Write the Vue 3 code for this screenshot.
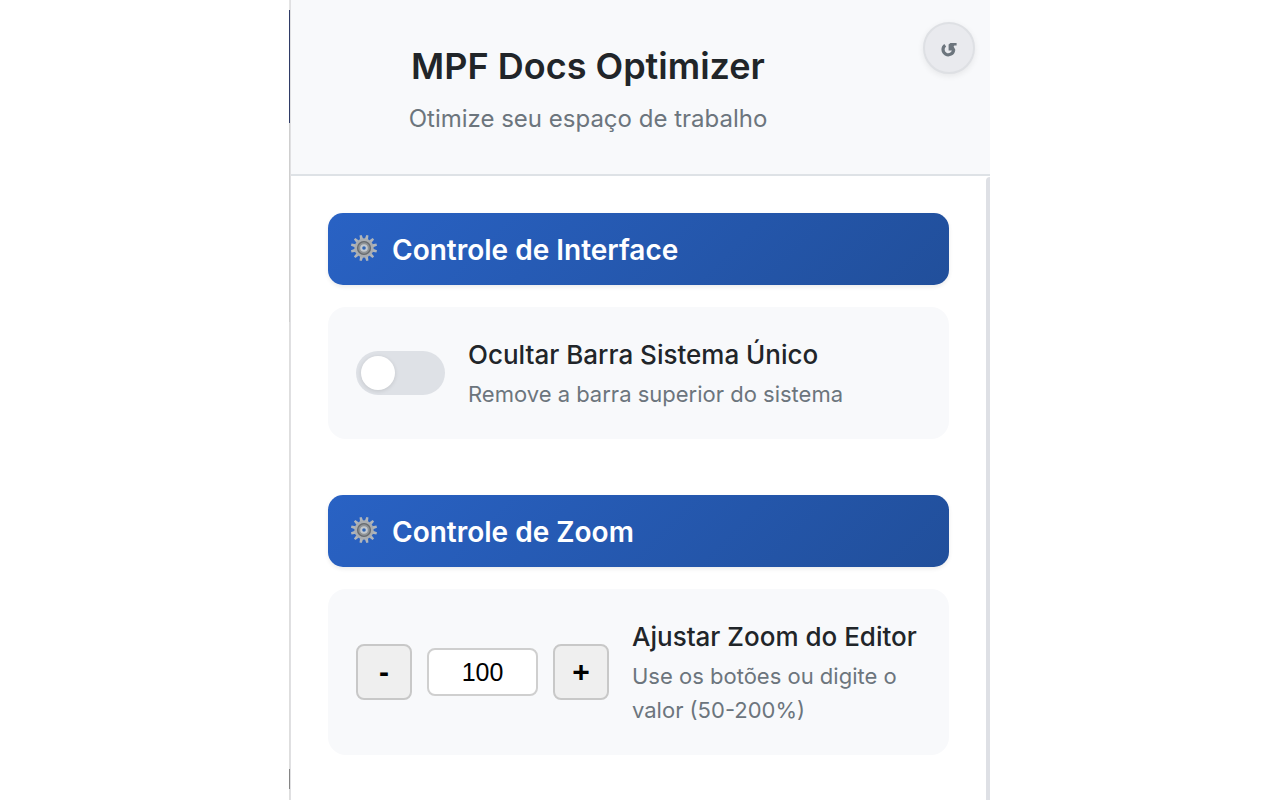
<script setup>
import { ref } from 'vue'

const hideBar = ref(false)
const zoom = ref('100')

function step(delta) {
  const next = (parseInt(zoom.value, 10) || 100) + delta
  zoom.value = String(Math.min(200, Math.max(50, next)))
}

function reset() {
  hideBar.value = false
  zoom.value = '100'
}

const teeth = Array.from({ length: 12 }, (_, i) => 15 + i * 30)
</script>

<template>
  <main class="panel">
    <header class="top">
      <div class="titles">
        <h1>MPF Docs Optimizer</h1>
        <p>Otimize seu espaço de trabalho</p>
      </div>
      <button class="reset" type="button" aria-label="Restaurar" @click="reset">
        <svg viewBox="0 0 16 16" width="16" height="16" aria-hidden="true">
          <path d="M4.2 3.2A5.3 5.3 0 1 0 12.6 8" fill="none" stroke="#6c757d" stroke-width="3.2" />
          <path d="M7.6 8.6V2.6L9.4 1H15.6V3.4H13.4L12.6 4.6L14.2 7.4V8.6Z" fill="#6c757d" />
        </svg>
      </button>
    </header>

    <div class="body">
      <div class="content">
        <section>
          <h2>
            <svg class="gear" viewBox="-14 -14 28 28" aria-hidden="true">
              <path v-for="a in teeth" :key="a" d="M-1.6-9L-1.1-13.2H1.1L1.6-9Z" fill="#b0b5ba" :transform="`rotate(${a})`" />
              <circle r="8.2" fill="#8f9396" stroke="#a9adb1" stroke-width="3" />
              <circle r="6.4" fill="none" stroke="#686c70" stroke-width="1.4" />
              <circle r="2.8" fill="#3166b4" stroke="#c3c8cd" stroke-width="2" />
            </svg>
            <span>Controle de Interface</span>
          </h2>
          <div class="card">
            <input id="hide-bar" v-model="hideBar" class="switch" type="checkbox" role="switch" />
            <div class="info">
              <label for="hide-bar">Ocultar Barra Sistema Único</label>
              <p>Remove a barra superior do sistema</p>
            </div>
          </div>
        </section>

        <section>
          <h2>
            <svg class="gear" viewBox="-14 -14 28 28" aria-hidden="true">
              <path v-for="a in teeth" :key="a" d="M-1.6-9L-1.1-13.2H1.1L1.6-9Z" fill="#b0b5ba" :transform="`rotate(${a})`" />
              <circle r="8.2" fill="#8f9396" stroke="#a9adb1" stroke-width="3" />
              <circle r="6.4" fill="none" stroke="#686c70" stroke-width="1.4" />
              <circle r="2.8" fill="#3166b4" stroke="#c3c8cd" stroke-width="2" />
            </svg>
            <span>Controle de Zoom</span>
          </h2>
          <div class="card">
            <div class="stepper">
              <button type="button" aria-label="Diminuir zoom" @click="step(-10)">-</button>
              <input id="zoom" v-model="zoom" type="text" inputmode="numeric" />
              <button type="button" aria-label="Aumentar zoom" @click="step(10)">+</button>
            </div>
            <div class="info">
              <label for="zoom">Ajustar Zoom do Editor</label>
              <p>Use os botões ou digite o valor (50-200%)</p>
            </div>
          </div>
        </section>
      </div>
      <div class="track"></div>
    </div>
  </main>
</template>

<style>
body {
  margin: 0;
  background: #fff;
}
</style>

<style scoped>
* {
  box-sizing: border-box;
}

.panel {
  position: relative;
  display: flex;
  flex-direction: column;
  max-width: 700px;
  min-height: 100vh;
  margin: 0 auto;
  border-left: 1px solid #e0e0e2;
  font-family: Inter, "Liberation Sans", sans-serif;
  color: #212529;
}

/* sliver of the page behind the panel */
.panel::before {
  content: "";
  position: absolute;
  top: 0;
  bottom: 0;
  left: -2px;
  width: 1px;
  background: linear-gradient(#e4e4e4 10px, #2f3b66 10px 123px, #cfcfcf 123px 322px, #dedede 322px 769px, #858585 769px 789px, #dedede 789px);
}

.top {
  display: flex;
  align-items: flex-start;
  padding: 22px 15px 38px 37px;
  background: #f8f9fb;
  border-bottom: 2px solid #dee2e6;
}

.titles {
  flex: 1;
  padding-top: 20px;
  padding-right: 75px;
  text-align: center;
}

h1,
h2,
p {
  margin: 0;
}

h1 {
  font-size: 36px;
  line-height: 48px;
  font-weight: 600;
}

.titles p {
  margin-top: 12px;
  font-size: 24px;
  line-height: 34px;
  color: #6c757d;
}

.reset {
  display: flex;
  align-items: center;
  justify-content: center;
  width: 52px;
  height: 52px;
  padding: 4px 0 0;
  border: 2px solid #dee0e4;
  border-radius: 50%;
  background: #e9eaee;
  box-shadow: 0 2px 6px rgba(0, 0, 0, 0.08);
}

.body {
  display: flex;
  flex: 1;
}

.content {
  flex: 1;
  display: flex;
  flex-direction: column;
  gap: 56px;
  padding: 37px 37px 46px;
}

.track {
  width: 4px;
  margin-top: 1px;
  background: #dee0e5;
  border-top-left-radius: 4px;
}

section {
  display: flex;
  flex-direction: column;
  gap: 22px;
}

h2 {
  display: flex;
  align-items: center;
  gap: 14px;
  padding: 19px 22px 17px;
  border-radius: 15px;
  background: linear-gradient(135deg, #2962c4, #214f9b);
  box-shadow: 0 2px 4px rgba(0, 0, 0, 0.08);
  color: #fff;
  font-size: 28px;
  line-height: 36px;
  font-weight: 600;
}

.gear {
  width: 28px;
  height: 28px;
  margin-bottom: 4px;
}

.card {
  display: flex;
  align-items: center;
  gap: 23px;
  padding: 28px;
  border-radius: 18px;
  background: #f8f9fb;
}

.info {
  flex: 1;
}

.info label {
  display: block;
  padding-top: 2px;
  font-size: 26px;
  line-height: 36px;
  font-weight: 500;
}

.info p {
  margin-top: 4px;
  font-size: 22px;
  line-height: 34px;
  color: #6c757d;
}

.switch {
  appearance: none;
  display: flex;
  align-items: center;
  width: 89px;
  height: 44px;
  margin: 0;
  padding: 0 5px;
  border-radius: 22px;
  background: #dee1e6;
}

.switch::before {
  content: "";
  width: 34px;
  height: 34px;
  border-radius: 50%;
  background: #fff;
  box-shadow: 0 1px 4px rgba(0, 0, 0, 0.12);
}

.switch:checked {
  justify-content: flex-end;
  background: #2962c4;
}

.stepper {
  display: flex;
  align-items: center;
  gap: 15px;
}

.stepper button {
  width: 56px;
  height: 56px;
  padding: 0;
  border: 2px solid #c8c8c8;
  border-radius: 8px;
  background: #efefef;
  color: #000;
  font-family: "Liberation Sans", sans-serif;
  font-size: 30px;
  font-weight: 700;
}

.stepper input {
  width: 111px;
  height: 48px;
  padding: 0;
  border: 2px solid #cfcfcf;
  border-radius: 8px;
  background: #fff;
  color: #000;
  text-align: center;
  font-family: "Liberation Sans", sans-serif;
  font-size: 25px;
}
</style>
